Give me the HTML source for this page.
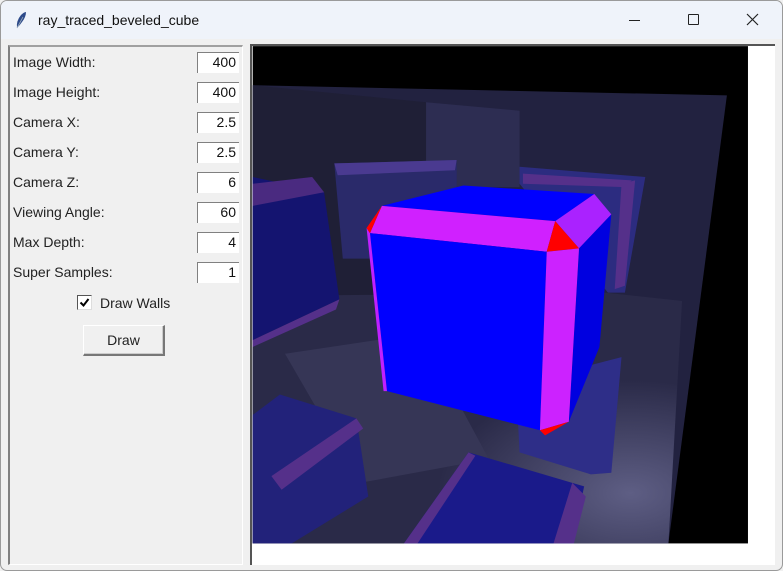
<!DOCTYPE html>
<html><head><meta charset="utf-8"><style>
*{margin:0;padding:0;box-sizing:border-box}
body{width:783px;height:571px;overflow:hidden;background:#f0f0f0;font-family:"Liberation Sans",sans-serif;position:relative}
.win{position:absolute;left:0;top:0;width:783px;height:571px;border:1px solid #9a9a9a;border-radius:7px;background:#f0f0f0;overflow:hidden}
.title{position:absolute;left:0;top:0;width:781px;height:38px;background:#eff3fa}
.title span{position:absolute;left:37px;top:11px;font-size:14px;color:#111}
.panel{position:absolute;left:7px;top:44px;width:235px;height:520px;border-left:2px solid #808080;border-top:2px solid #a0a0a0;border-right:1px solid #fff;border-bottom:1px solid #fff}
.lbl{position:absolute;left:12px;font-size:14px;color:#222}
.ent{position:absolute;left:196px;width:42px;height:21px;background:#fff;border-top:1px solid #808080;border-left:1px solid #808080;font-size:14px;text-align:right;padding-right:3px;line-height:19px;color:#111}
.canvas{position:absolute;left:249px;top:43px;width:525px;height:521px;background:#fff;border-left:2px solid #555;border-top:2px solid #555}
</style></head><body><div class="win">
<div class="title">
<svg style="position:absolute;left:13px;top:10px" width="14" height="18" viewBox="0 0 14 18"><path d="M3 17 Q2 10 7 4 Q10 1 12 1 Q12 6 8 11 Q6 14 3 17Z" fill="#2d4a8a"/><path d="M3 17 L9 6" stroke="#9ab" stroke-width="0.8"/></svg>
<span>ray_traced_beveled_cube</span>
<div style="position:absolute;left:628px;top:19px;width:11px;height:1px;background:#222"></div>
<div style="position:absolute;left:687px;top:13px;width:11px;height:11px;border:1px solid #222;border-radius:1px"></div>
<svg style="position:absolute;left:745px;top:12px" width="13" height="13"><path d="M1 1L12 12M12 1L1 12" stroke="#222" stroke-width="1.2"/></svg>
</div>
<div class="panel"></div>
<div class="lbl" style="top:53px">Image Width:</div><div class="ent" style="top:51px">400</div>
<div class="lbl" style="top:83px">Image Height:</div><div class="ent" style="top:81px">400</div>
<div class="lbl" style="top:113px">Camera X:</div><div class="ent" style="top:111px">2.5</div>
<div class="lbl" style="top:143px">Camera Y:</div><div class="ent" style="top:141px">2.5</div>
<div class="lbl" style="top:173px">Camera Z:</div><div class="ent" style="top:171px">6</div>
<div class="lbl" style="top:203px">Viewing Angle:</div><div class="ent" style="top:201px">60</div>
<div class="lbl" style="top:233px">Max Depth:</div><div class="ent" style="top:231px">4</div>
<div class="lbl" style="top:263px">Super Samples:</div><div class="ent" style="top:261px">1</div>
<div style="position:absolute;left:76px;top:294px;width:15px;height:15px;background:#fff;border:1px solid #555;border-right-color:#ddd;border-bottom-color:#ddd"><svg width="13" height="13" style="position:absolute;left:0;top:0"><path d="M2.5 6.5L5.5 9.5L10.5 3" stroke="#000" stroke-width="2" fill="none"/></svg></div>
<div class="lbl" style="left:99px;top:294px">Draw Walls</div>
<div style="position:absolute;left:82px;top:324px;width:82px;height:31px;background:#f0f0f0;border:1px solid #fff;border-right:2px solid #777;border-bottom:2px solid #777;box-shadow:inset -1px -1px 0 #ccc;font-size:14px;text-align:center;line-height:28px;color:#222">Draw</div>
<div class="canvas"></div>
<svg style="position:absolute;left:250px;top:40px" width="533" height="531" viewBox="0 0 1568 1562">
<defs><radialGradient id="fl" cx="0.88" cy="0.8" r="0.45"><stop offset="0" stop-color="#5e5e84"/><stop offset="1" stop-color="#2a2a48"/></radialGradient></defs>
<rect x="5" y="15" width="1457" height="1463" fill="#000"/>
<polygon points="5,130 1400,160 1228,1478 5,1478" fill="#222240"/>
<polygon points="5,130 515,180 515,900 5,900" fill="#1f1f36"/>
<polygon points="515,180 790,205 790,430 515,430" fill="#2d2d52"/>
<polygon points="5,750 1040,740 1268,765 1228,1478 5,1478" fill="url(#fl)"/>
<polygon points="100,920 500,860 700,1230 320,1300" fill="#363656"/>
<polygon points="245,360 605,350 605,620 500,640 270,640" fill="#2a2a6a"/>
<polygon points="245,360 605,350 600,380 255,395" fill="#4a3a90"/>
<polygon points="790,370 1160,400 1100,740 1050,740 790,420" fill="#2c2c80"/>
<polygon points="800,390 1120,410 1100,430 800,420" fill="#55308a"/>
<polygon points="1090,420 1130,410 1100,720 1070,730" fill="#55308a"/>
<polygon points="5,400 215,445 260,760 5,880" fill="#141470"/>
<polygon points="5,420 180,400 215,445 5,485" fill="#4a2a80"/>
<polygon points="5,880 260,760 250,790 5,900" fill="#55308a"/>
<polygon points="5,1100 85,1040 310,1110 345,1340 120,1478 5,1478" fill="#22227a"/>
<polygon points="60,1280 310,1110 330,1140 90,1320" fill="#55308a"/>
<polygon points="780,1010 1090,930 1060,1270 1000,1275 790,1210" fill="#2e2e88"/>
<polygon points="640,1210 980,1310 945,1478 450,1478" fill="#1a1a8a"/>
<polygon points="640,1210 450,1478 490,1478 660,1220" fill="#55308a"/>
<polygon points="945,1300 985,1340 950,1478 890,1478" fill="#55308a"/>
<polygon points="385,485 625,425 1010,450 895,530" fill="#0000ff"/>
<polygon points="385,485 895,530 870,620 350,565" fill="#d020ff"/>
<polygon points="895,530 1010,450 1060,510 965,610" fill="#aa22ff"/>
<polygon points="895,530 965,610 870,620" fill="#ff0000"/>
<polygon points="965,610 1060,510 1025,900 935,1120" fill="#0000e0"/>
<polygon points="350,565 870,620 850,1145 400,1030" fill="#0000ff"/>
<polygon points="340,550 350,565 400,1030 390,1030" fill="#c020ff"/>
<polygon points="870,620 965,610 935,1120 850,1145" fill="#cc22ff"/>
<polygon points="385,485 350,565 340,550" fill="#ff0000"/>
<polygon points="850,1145 935,1120 865,1160" fill="#ff0000"/>
</svg>
</div></body></html>
